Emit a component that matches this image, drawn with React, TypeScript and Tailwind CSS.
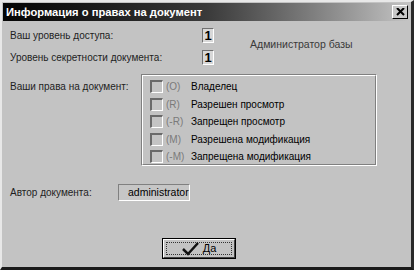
import React from "react";

const rights = [
  ["(O)", "Владелец"],
  ["(R)", "Разрешен просмотр"],
  ["(-R)", "Запрещен просмотр"],
  ["(M)", "Разрешена модификация"],
  ["(-M)", "Запрещена модификация"],
];

function Check() {
  return (
    <div className="w-[13px] h-[13px] border-t-2 border-l-2 border-t-[#6a6a6a] border-l-[#6a6a6a] border-b border-r border-b-white border-r-white bg-[#c4c4c4] shrink-0" />
  );
}

function NumBox() {
  return (
    <div className="w-[12px] h-[15px] border-t border-l border-t-[#707070] border-l-[#707070] border-b border-r border-b-white border-r-white bg-[#d8d8d8] flex items-center justify-center text-[13px] font-bold text-black leading-none shrink-0">
      1
    </div>
  );
}

export default function App() {
  return (
    <div
      className="w-[414px] h-[270px] bg-[#c3c3c3] border-t-2 border-l-2 border-t-[#e8e8e8] border-l-[#e8e8e8] border-b-[3px] border-r-[3px] border-b-[#1a1a1a] border-r-[#2a2a2a] flex flex-col text-[10px] text-[#1e1e1e] overflow-hidden"
      style={{ fontFamily: '"Liberation Sans", Arial, sans-serif' }}
    >
      <div className="mx-[1px] mt-[1px] h-[18px] bg-gradient-to-r from-[#050505] via-[#3a3a3a] to-[#c4c4c4] flex items-center pl-[3px] pr-[2px]">
        <span className="text-white font-bold text-[11.2px] flex-1">Информация о правах на документ</span>
        <div className="w-[16px] h-[14px] bg-[#c8c8c8] border-t border-l border-t-white border-l-white border-b border-r border-b-black border-r-black flex items-center justify-center">
          <svg width="9" height="8" viewBox="0 0 9 8">
            <path d="M1 0 L8 7 M8 0 L1 7" stroke="#000" strokeWidth="2" />
          </svg>
        </div>
      </div>

      <div className="flex flex-col pl-[8px] pt-[7px] flex-1">
        <div className="flex items-start">
          <div className="flex flex-col gap-[7px] w-[204px]">
            <div className="flex items-center h-[15px]">
              <span className="w-[192px] shrink-0">Ваш уровень доступа:</span>
              <NumBox />
            </div>
            <div className="flex items-center h-[15px]">
              <span className="w-[192px] shrink-0">Уровень секретности документа:</span>
              <NumBox />
            </div>
          </div>
          <span className="ml-[36px] mt-[9px] text-[#3a3a3a] text-[10.5px]">Администратор базы</span>
        </div>

        <div className="flex mt-[9px]">
          <span className="w-[131px] shrink-0 mt-[5px]">Ваши права на документ:</span>
          <div className="w-[236px] h-[92px] border border-t-[#808080] border-l-[#808080] border-b-white border-r-white">
            <div className="w-full h-full border border-t-white border-l-white border-b-[#808080] border-r-[#808080] flex flex-col pl-[7px] pt-[4px] gap-[4.5px]">
              {rights.map(([code, label]) => (
                <div key={code} className="flex items-center h-[13px]">
                  <Check />
                  <span className="ml-[3px] w-[23px] text-[#7a7a7a]">{code}</span>
                  <span className="ml-[2px] text-black">{label}</span>
                </div>
              ))}
            </div>
          </div>
        </div>

        <div className="flex items-center mt-[18px]">
          <span className="w-[108px] shrink-0">Автор документа:</span>
          <div className="w-[72px] h-[17px] border border-t-[#808080] border-l-[#808080] border-b-white border-r-white bg-[#c6c6c6] overflow-hidden flex items-center pl-[9px] whitespace-nowrap text-black text-[10.5px]">
            administrator
          </div>
        </div>

        <div className="flex mt-[37px] pl-[152px]">
          <div className="w-[74px] h-[21px] border border-black">
            <div className="w-full h-full border-t border-l border-t-white border-l-white border-b border-r border-b-[#444] border-r-[#444] flex items-center justify-center p-[2px]">
              <div className="w-full h-full border border-dotted border-[#333] flex items-center justify-center gap-[3px]">
                <svg width="18" height="14" viewBox="0 0 18 14">
                  <path d="M1 7 L6 12 L16 1" stroke="#111" strokeWidth="2.5" fill="none" />
                </svg>
                <span className="text-black text-[11px]">Да</span>
              </div>
            </div>
          </div>
        </div>
      </div>
    </div>
  );
}
